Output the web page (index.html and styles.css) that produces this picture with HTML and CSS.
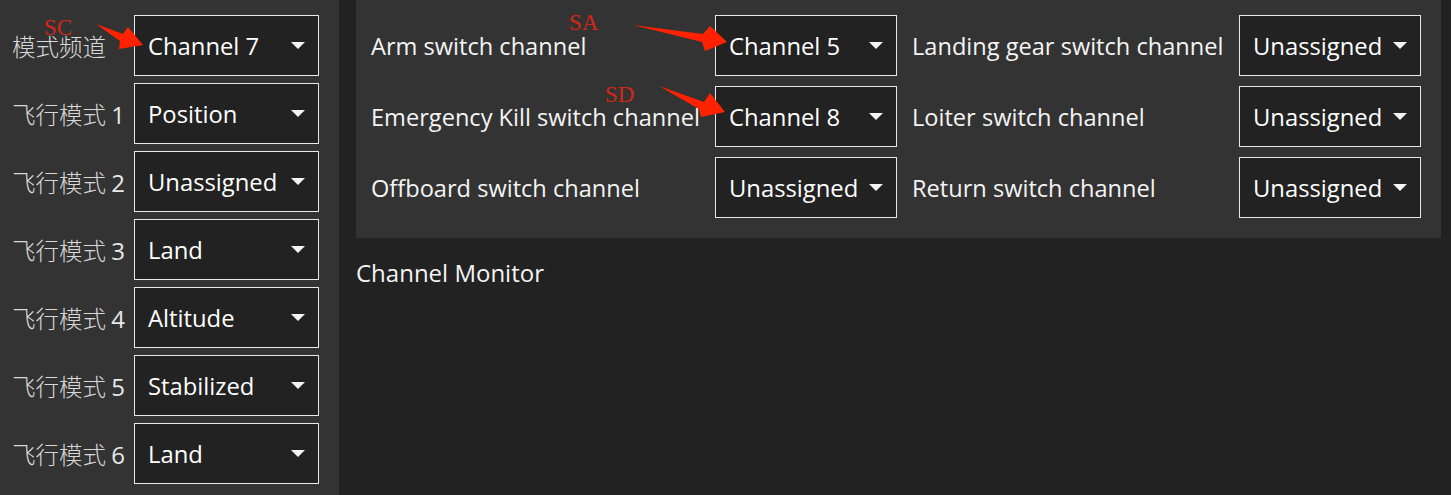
FILE: index.html
```html
<!DOCTYPE html>
<html lang="zh">
<head>
<meta charset="utf-8">
<title>Radio setup</title>
<link rel="stylesheet" href="styles.css">
</head>
<body>
<div class="page">
  <aside class="modes">
    <div class="mode-row"><span class="cn">模式频道</span><div class="combo"><span>Channel 7</span><i class="caret"></i></div></div>
    <div class="mode-row"><span class="cn">飞行模式 <span class="num">1</span></span><div class="combo"><span>Position</span><i class="caret"></i></div></div>
    <div class="mode-row"><span class="cn">飞行模式 <span class="num">2</span></span><div class="combo"><span>Unassigned</span><i class="caret"></i></div></div>
    <div class="mode-row"><span class="cn">飞行模式 <span class="num">3</span></span><div class="combo"><span>Land</span><i class="caret"></i></div></div>
    <div class="mode-row"><span class="cn">飞行模式 <span class="num">4</span></span><div class="combo"><span>Altitude</span><i class="caret"></i></div></div>
    <div class="mode-row"><span class="cn">飞行模式 <span class="num">5</span></span><div class="combo"><span>Stabilized</span><i class="caret"></i></div></div>
    <div class="mode-row"><span class="cn">飞行模式 <span class="num">6</span></span><div class="combo"><span>Land</span><i class="caret"></i></div></div>
  </aside>
  <main class="main">
    <section class="switches">
      <span class="lbl">Arm switch channel</span>
      <div class="combo"><span>Channel 5</span><i class="caret"></i></div>
      <span class="lbl">Landing gear switch channel</span>
      <div class="combo"><span>Unassigned</span><i class="caret"></i></div>
      <span class="lbl">Emergency Kill switch channel</span>
      <div class="combo"><span>Channel 8</span><i class="caret"></i></div>
      <span class="lbl">Loiter switch channel</span>
      <div class="combo"><span>Unassigned</span><i class="caret"></i></div>
      <span class="lbl">Offboard switch channel</span>
      <div class="combo"><span>Unassigned</span><i class="caret"></i></div>
      <span class="lbl">Return switch channel</span>
      <div class="combo"><span>Unassigned</span><i class="caret"></i></div>
    </section>
    <h2 class="monitor">Channel Monitor</h2>
  </main>
</div>
<svg class="notes" width="1451" height="495" viewBox="0 0 1451 495" xmlns="http://www.w3.org/2000/svg">
  <text class="note-text" x="44" y="35">SC</text>
  <text class="note-text" x="569" y="30">SA</text>
  <text class="note-text" x="605" y="102">SD</text>
  <polygon class="arrow" points="96,24 123,34 128,27 143,45 119,49 120,41"/>
  <polygon class="arrow" points="633,25 703,34 710,26 727,42 705,51 702,42"/>
  <polygon class="arrow" points="659,86 704,102 710,93 725,112 701,117 699,109"/>
</svg>
</body>
</html>
```

FILE: styles.css
```css
* { box-sizing: border-box; }
html, body {
  margin: 0;
  padding: 0;
  background: #222222;
  height: 100%;
  overflow: hidden;
}
body {
  font-family: "Open Sans", "Noto Sans", sans-serif;
  font-size: 23.8px;
  color: #ffffff;
  position: relative;
}
.page {
  display: flex;
  gap: 17px;
  height: 100%;
}
.modes {
  width: 339px;
  flex: none;
  background: #333333;
  padding: 15px 20px 0 12px;
  display: flex;
  flex-direction: column;
  gap: 7px;
  min-height: 100%;
}
.mode-row {
  display: grid;
  grid-template-columns: 122px 185px;
  align-items: center;
  height: 61px;
}
.cn {
  font-family: "Noto Sans CJK SC", "Open Sans", sans-serif;
  font-weight: 300;
  font-size: 23.5px;
  color: #d8d8d8;
  white-space: nowrap;
}
.num {
  font-family: "Open Sans", sans-serif;
  font-weight: 400;
  font-size: 24px;
  color: #e8e8e8;
}
.combo {
  position: relative;
  height: 61px;
  border: 1px solid #e8e8e8;
  background: #222222;
  display: flex;
  align-items: center;
  padding-left: 13px;
  white-space: nowrap;
}
.caret {
  position: absolute;
  right: 13px;
  top: 50%;
  margin-top: -4px;
  width: 0;
  height: 0;
  border-left: 7px solid transparent;
  border-right: 7px solid transparent;
  border-top: 7px solid #f4f4f4;
}
.main {
  width: 1085px;
  flex: none;
  display: flex;
  flex-direction: column;
}
.switches {
  background: #333333;
  padding: 15px 20px 20px 15px;
  display: grid;
  grid-template-columns: 329px 182px 312px 182px;
  grid-auto-rows: 61px;
  column-gap: 15px;
  row-gap: 10px;
  align-items: center;
}
.lbl {
  white-space: nowrap;
  font-size: 23.6px;
  color: #f4f4f4;
}
.switches .combo {
  height: 61px;
}
.monitor {
  margin: 19px 0 0 0;
  font-size: 24px;
  font-weight: 400;
  line-height: 32px;
  color: #f4f4f4;
}
.notes {
  position: absolute;
  left: 0;
  top: 0;
  pointer-events: none;
}
.note-text {
  font-family: "Liberation Serif", "Times New Roman", serif;
  font-size: 23px;
  fill: #d42617;
}
.arrow {
  fill: #ff2200;
}
```
